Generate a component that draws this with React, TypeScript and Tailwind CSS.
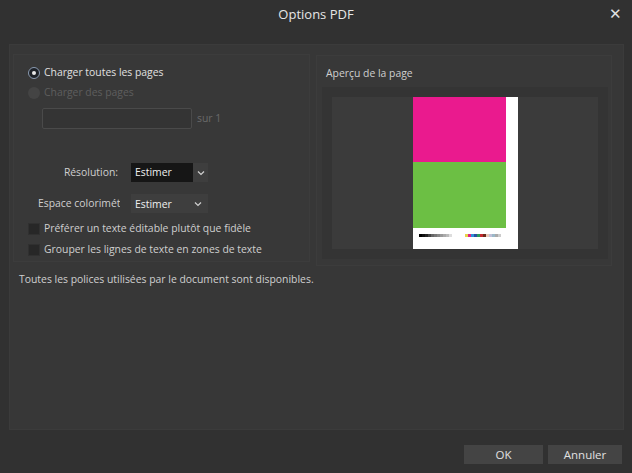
import React from "react";

const font = { fontFamily: '"Segoe UI", "Open Sans", "Noto Sans", sans-serif' };

function Chevron() {
  return (
    <svg width="8" height="6" viewBox="0 0 8 6" fill="none">
      <path d="M1 1.5 L4 4.5 L7 1.5" stroke="#d0d0d0" strokeWidth="1.2" />
    </svg>
  );
}

const grays = ["#000", "#111", "#222", "#444", "#666", "#777", "#888", "#999", "#aaa", "#bbb", "#ddd", "#fff"];
const colors = ["#e8d34a", "#e0228a", "#2f8fd8", "#2a4fa0", "#2b9a5a", "#c3282e", "#6a2a1a", "#e8c8b8", "#c0c0d8", "#9bb8c8", "#aaaaaa", "#cccccc"];

export default function App() {
  return (
    <div
      className="w-[632px] h-[473px] bg-[#313131] text-[#d4d4d4] flex flex-col overflow-hidden"
      style={font}
    >
      <div className="h-[30px] relative flex items-center justify-center text-[13px] text-[#e6e6e6]">
        Options PDF
        <span className="absolute right-[10px] top-[6px] text-[15px] leading-none text-[#e0e0e0]">✕</span>
      </div>
      <div className="mt-[14px] ml-[9px] w-[615px] h-[386px] bg-[#373737] border border-[#3b3b3b] flex flex-col">
        <div className="flex mt-[9px] ml-[3px] gap-[6px]">
          {/* left panel */}
          <div className="w-[297px] h-[208px] bg-[#383838] border border-[#3c3c3c] flex flex-col text-[10.4px]">
            <div className="flex items-center mt-[11px] ml-[14px] h-[14px]">
              <span className="w-[12px] h-[12px] rounded-full bg-[#1e2228] border border-[#8a9ab0] flex items-center justify-center">
                <span className="w-[4px] h-[4px] rounded-full bg-[#e8e8e8]" />
              </span>
              <span className="ml-[4px] text-[#e0e0e0]">Charger toutes les pages</span>
            </div>
            <div className="flex items-center mt-[6px] ml-[14px] h-[14px]">
              <span className="w-[12px] h-[12px] rounded-full bg-[#444444]" />
              <span className="ml-[4px] text-[#5e5e5e]">Charger des pages</span>
            </div>
            <div className="flex items-center mt-[8px] ml-[28px]">
              <div className="w-[150px] h-[21px] bg-[#343434] border border-[#4a4a4a] rounded-[2px]" />
              <span className="ml-[5px] text-[#6a6a6a]">sur 1</span>
            </div>
            <div className="flex items-center mt-[34px] h-[19px]">
              <span className="w-[104px] text-right text-[#cfcfcf]">Résolution:</span>
              <div className="ml-[13px] w-[62px] h-[19px] bg-[#161616] flex items-center pl-[4px] text-[#f0f0f0]">Estimer</div>
              <div className="w-[15px] h-[19px] bg-[#3e3e3e] flex items-center justify-center"><Chevron /></div>
            </div>
            <div className="flex items-center mt-[12px] h-[19px]">
              <span className="ml-[24px] w-[82px] overflow-hidden whitespace-nowrap text-[#cfcfcf]">Espace colorimétrique:</span>
              <div className="ml-[11px] w-[77px] h-[19px] bg-[#3e3e3e] flex items-center pl-[4px] pr-[6px] justify-between text-[#f0f0f0]">
                <span className="mt-[2px]">Estimer</span>
                <Chevron />
              </div>
            </div>
            <div className="flex items-center mt-[9px] ml-[14px] h-[14px]">
              <span className="w-[12px] h-[12px] bg-[#272727] border border-[#303030]" />
              <span className="ml-[4px] text-[#cfcfcf]">Préférer un texte éditable plutôt que fidèle</span>
            </div>
            <div className="flex items-center mt-[7px] ml-[14px] h-[14px]">
              <span className="w-[12px] h-[12px] bg-[#272727] border border-[#303030]" />
              <span className="ml-[4px] text-[#cfcfcf]">Grouper les lignes de texte en zones de texte</span>
            </div>
          </div>
          {/* right panel */}
          <div className="w-[296px] h-[211px] bg-[#383838] border border-[#3c3c3c] flex flex-col mt-[1px]">
            <div className="text-[10.4px] text-[#cfcfcf] ml-[9px] mt-[10px] h-[15px] leading-[15px]">Aperçu de la page</div>
            <div className="ml-[5px] mt-[6px] w-[286px] h-[172px] bg-[#343434] flex p-[10px]">
              <div className="flex-1 bg-[#3b3b3b] flex justify-center">
                <div className="w-[105px] h-[152px] bg-white flex flex-col">
                  <div className="flex flex-col w-[93px]">
                    <div className="h-[65px] bg-[#ea1a8e]" />
                    <div className="h-[66px] bg-[#6cbf44]" />
                  </div>
                  <div className="flex mt-[6px] ml-[6px] items-center">
                    <div className="flex h-[3px]">
                      {grays.map((c, i) => (
                        <div key={i} className="w-[3px] h-[3px]" style={{ background: c }} />
                      ))}
                    </div>
                    <div className="flex h-[3px] ml-[10px]">
                      {colors.map((c, i) => (
                        <div key={i} className="w-[3px] h-[3px]" style={{ background: c }} />
                      ))}
                    </div>
                  </div>
                </div>
              </div>
            </div>
          </div>
        </div>
        <div className="ml-[9px] mt-[6px] text-[10.4px] text-[#cfcfcf]">
          Toutes les polices utilisées par le document sont disponibles.
        </div>
      </div>
      <div className="flex justify-end mt-[15px] mr-[10px] gap-[5px] text-[11.5px] text-[#e0e0e0]">
        <div className="w-[79px] h-[19px] bg-[#444444] flex items-center justify-center">OK</div>
        <div className="w-[74px] h-[19px] bg-[#444444] flex items-center justify-center">Annuler</div>
      </div>
    </div>
  );
}
